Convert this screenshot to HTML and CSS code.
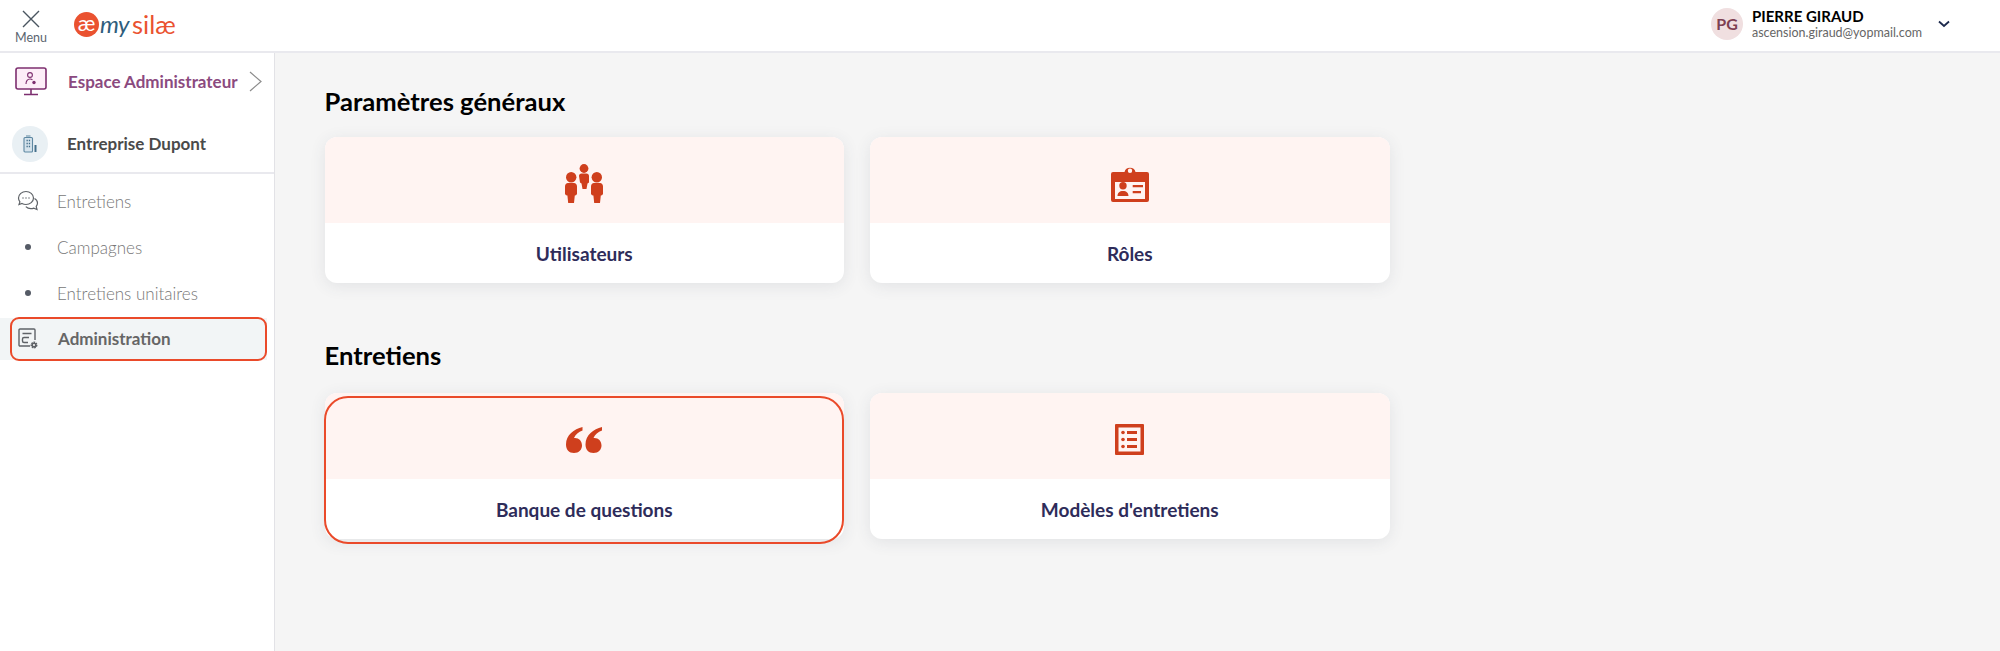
FILE: index.html
```html
<!DOCTYPE html>
<html lang="fr">
<head>
<meta charset="utf-8">
<title>mySilae</title>
<link rel="stylesheet" href="styles.css">
</head>
<body>
<header class="topbar">
  <div class="menu">
    <svg class="menu-x" viewBox="0 0 18 18" width="18" height="18"><path d="M1 1l16 16M17 1L1 17" fill="none" stroke="#4a5560" stroke-width="1.4"/></svg>
    <span class="menu-label">Menu</span>
  </div>
  <div class="logo">
    <span class="logo-badge">æ</span>
    <span class="logo-my">my</span>
    <span class="logo-silae">silæ</span>
  </div>
  <div class="user">
    <span class="avatar">PG</span>
    <div class="user-text">
      <span class="user-name">PIERRE GIRAUD</span>
      <span class="user-mail">ascension.giraud@yopmail.com</span>
    </div>
    <svg class="user-caret" viewBox="0 0 12 8" width="12" height="8"><path d="M1 1.500l5 4.500 5-4.500" fill="none" stroke="#1d2a4d" stroke-width="1.800"/></svg>
  </div>
</header>
<div class="shell">
  <aside class="sidebar">
    <div class="space">
      <svg class="space-icon" viewBox="0 0 32 29" width="32" height="29">
        <rect x="1" y="1" width="30" height="21" rx="2" fill="#fdeef8" stroke="#7d2f6f" stroke-width="1.600"/>
        <path d="M16 22v5M9 27.500h14" stroke="#7d2f6f" stroke-width="1.600" fill="none"/>
        <circle cx="15" cy="8" r="2.400" fill="none" stroke="#7d2f6f" stroke-width="1.100"/>
        <path d="M11 17c0-3 1.500-5 4-5 1 0 2 .4 2.500 1" fill="none" stroke="#7d2f6f" stroke-width="1.100"/>
        <circle cx="19" cy="15.500" r="1.700" fill="#7d2f6f"/>
      </svg>
      <span class="space-label">Espace Administrateur</span>
      <svg class="space-chev" viewBox="0 0 13 21" width="13" height="21"><path d="M1 1l11 9.500L1 20" fill="none" stroke="#8c8c8c" stroke-width="1.200"/></svg>
    </div>
    <div class="company">
      <span class="company-badge">
        <svg viewBox="0 0 14 18" width="14" height="18">
          <rect x="1" y="2.500" width="8.500" height="14.500" rx="1" fill="#d5e3ec" stroke="#5d87a1" stroke-width="1.100"/>
          <path d="M3 1h4.500" stroke="#5d87a1" stroke-width="1"/>
          <path d="M3.500 5.500h1.300M5.800 5.500h1.300M3.500 8.500h1.300M5.800 8.500h1.300M3.500 11.500h1.300M5.800 11.500h1.300" stroke="#44708c" stroke-width="1.300"/>
          <path d="M12.500 10v7" stroke="#44708c" stroke-width="2"/>
        </svg>
      </span>
      <span class="company-label">Entreprise Dupont</span>
    </div>
    <nav class="nav">
      <a class="nav-item">
        <span class="nav-ico">
          <svg viewBox="0 0 22 22" width="22" height="22" fill="none" stroke="#5f6368" stroke-width="1.200">
            <path d="M9 1.500c-4 0-7.500 2.800-7.500 6.500 0 1.500.5 2.800 1.400 3.900L2 14.500l3-1c1.200.7 2.500 1 4 1 4 0 7.500-2.800 7.500-6.500S13 1.500 9 1.500z"/>
            <path d="M17.500 8.500c1.800 1 3 2.700 3 4.600 0 1.300-.5 2.400-1.300 3.300l.8 3.100-3.200-1.400c-1 .4-2 .6-3 .6-2 0-3.800-.8-5-2"/>
            <path d="M5.500 8h1M8.500 8h1M11.500 8h1" stroke-width="1.500"/>
          </svg>
        </span>
        <span class="nav-label">Entretiens</span>
      </a>
      <a class="nav-item">
        <span class="nav-ico"><span class="dot"></span></span>
        <span class="nav-label">Campagnes</span>
      </a>
      <a class="nav-item">
        <span class="nav-ico"><span class="dot"></span></span>
        <span class="nav-label">Entretiens unitaires</span>
      </a>
      <a class="nav-item is-active">
        <span class="nav-ico">
          <svg viewBox="0 0 22 22" width="22" height="22" fill="none" stroke="#5f6368" stroke-width="1.400">
            <path d="M13 18H3a1 1 0 0 1-1-1V2a1 1 0 0 1 1-1h14a1 1 0 0 1 1 1v10"/>
            <path d="M5.500 5.500h9M12 9.500H7a1.500 1.500 0 0 0-1.500 1.500v2A1.500 1.500 0 0 0 7 14.500h4"/>
            <circle cx="17" cy="17" r="2.600" fill="#5f6368" stroke-width="1.800" stroke-dasharray="1.500 .8"/>
            <circle cx="17" cy="17" r="1" fill="#fff" stroke="none"/>
          </svg>
        </span>
        <span class="nav-label">Administration</span>
      </a>
    </nav>
  </aside>
  <main class="content">
    <h2 class="section-title">Paramètres généraux</h2>
    <div class="cards">
      <a class="card">
        <span class="card-top">
          <svg viewBox="0 0 38 39" width="38" height="39" fill="#cf3f1d">
            <circle cx="19" cy="4.500" r="4.400"/>
            <path d="M14 12c0-1.500 1-2.500 2.500-2.500h5c1.500 0 2.500 1 2.500 2.500v6.500l-1.500 1-1 5.500h-4l-1-5.500-1.500-1z"/>
            <circle cx="6.200" cy="13.200" r="5.200"/>
            <path d="M0 22.500c0-2 1.300-3.500 3-3.500h6c1.700 0 3 1.500 3 3.500V30l-1 1.200-1.200.3L9 39H3.200l-.8-7.500-1.400-.3-1-1.200z"/>
            <circle cx="31.800" cy="13.200" r="5.200"/>
            <path d="M26 22.500c0-2 1.300-3.500 3-3.500h6c1.700 0 3 1.500 3 3.500V30l-1 1.200-1.200.3-.8 7.500h-5.800l-.8-7.500-1.400-.3-1-1.200z"/>
          </svg>
        </span>
        <span class="card-label">Utilisateurs</span>
      </a>
      <a class="card">
        <span class="card-top">
          <svg viewBox="0 0 38 37" width="38" height="37" fill="#cf3f1d">
            <path fill-rule="evenodd" d="M2 7h11.500a5.700 5.700 0 0 1 11 0H36a2 2 0 0 1 2 2v26a2 2 0 0 1-2 2H2a2 2 0 0 1-2-2V9a2 2 0 0 1 2-2zM19 3.500a2.200 2.200 0 1 0 0 4.400 2.200 2.200 0 0 0 0-4.400zM4 17v17h30V17z"/>
            <circle cx="12" cy="20.700" r="3.700"/>
            <path d="M6.500 31c0-3 2-5 5.500-5s5.500 2 5.500 5zM21.700 20h10.300v2.300H21.700zM21.700 26h8.300v2.300h-8.300z"/>
          </svg>
        </span>
        <span class="card-label">Rôles</span>
      </a>
    </div>
    <h2 class="section-title section-second">Entretiens</h2>
    <div class="cards">
      <a class="card is-marked">
        <span class="card-top">
          <svg viewBox="0 0 36 27" width="36" height="27" fill="#cf3f1d">
            <path d="M16.500 1C8 3 0 9 0 18.500 0 23.500 3 27 8 27s8-3.500 8-7.500c0-4.500-3-7.500-7-7.500-.5 0-.8 0-1 .1C9.500 8.500 12.500 6 16.500 4.500z"/>
            <path d="M36 1c-8.500 2-16.500 8-16.500 17.500 0 5 3 8.500 8 8.500s8-3.500 8-7.500c0-4.500-3-7.500-7-7.500-.5 0-.8 0-1 .1C29 8.500 32 6 36 4.500z"/>
          </svg>
        </span>
        <span class="card-label">Banque de questions</span>
      </a>
      <a class="card">
        <span class="card-top">
          <svg viewBox="0 0 29 31" width="29" height="31" fill="#cf3f1d">
            <path fill-rule="evenodd" d="M1 0h27a1 1 0 0 1 1 1v29a1 1 0 0 1-1 1H1a1 1 0 0 1-1-1V1a1 1 0 0 1 1-1zM3.500 3.500v24h22v-24z"/>
            <circle cx="8" cy="8.500" r="1.800"/><circle cx="8" cy="15.500" r="1.800"/><circle cx="8" cy="22.500" r="1.800"/>
            <path d="M12 7h10v3H12zM12 14h10v3H12zM12 21h10v3H12z"/>
          </svg>
        </span>
        <span class="card-label">Modèles d'entretiens</span>
      </a>
    </div>
  </main>
</div>
</body>
</html>
```

FILE: styles.css
```css
* { box-sizing: border-box; }
html, body { margin: 0; height: 100%; }
body {
  font-family: Lato, "Liberation Sans", sans-serif;
  background: #f5f5f5;
  height: 651px;
  overflow: hidden;
  display: flex;
  flex-direction: column;
}

/* Top bar */
.topbar {
  flex: none;
  height: 53px;
  background: #fff;
  border-bottom: 2px solid #e9e9ee;
  display: flex;
  align-items: flex-start;
  padding-left: 15px;
}
.menu {
  width: 32px;
  display: flex;
  flex-direction: column;
  align-items: center;
  padding-top: 10px;
}
.menu-x { display: block; }
.menu-label {
  font-size: 12.500px;
  line-height: 14px;
  color: #5a6570;
  margin-top: 3px;
}
.logo {
  display: flex;
  align-items: center;
  margin-left: 27px;
  margin-top: 10px;
  height: 28px;
}
.logo-badge {
  width: 25px;
  height: 25px;
  border-radius: 50%;
  background: #ea5230;
  color: #fff;
  font-size: 22px;
  line-height: 22px;
  text-align: center;
}
.logo-my {
  font-style: italic;
  font-size: 24px;
  line-height: 28px;
  letter-spacing: -.5px;
  color: #2f5d7c;
  margin-left: 1px;
  width: 32px;
}
.logo-silae {
  font-size: 25.500px;
  line-height: 28px;
  font-weight: 400;
  color: #ea5230;
}
.user {
  margin-left: auto;
  margin-top: 8px;
  margin-right: 50px;
  display: flex;
  align-items: flex-start;
}
.avatar {
  width: 32px;
  height: 32px;
  border-radius: 50%;
  background: #f0dfe0;
  color: #7e3f52;
  font-size: 16px;
  font-weight: 700;
  line-height: 32px;
  text-align: center;
}
.user-text {
  display: flex;
  flex-direction: column;
  margin-left: 9px;
  width: 186px;
}
.user-name {
  font-size: 15px;
  line-height: 17px;
  font-weight: 700;
  color: #000;
}
.user-mail {
  font-size: 12.500px;
  line-height: 14px;
  margin-top: 1px;
  color: #666;
}
.user-caret { margin-top: 12px; }

/* Layout */
.shell {
  flex: 1;
  display: flex;
  min-height: 0;
}
.sidebar {
  flex: none;
  width: 275px;
  background: #fff;
  border-right: 1px solid #e2e2e6;
}
.space {
  display: flex;
  align-items: center;
  height: 57px;
  padding: 0 12px 0 15px;
}
.space-icon { flex: none; }
.space-label {
  margin-left: 21px;
  font-size: 17px;
  font-weight: 700;
  color: #8b4a7f;
  white-space: nowrap;
}
.space-chev { margin-left: auto; }
.company {
  display: flex;
  align-items: center;
  height: 64px;
  padding: 5px 0 0 12px;
  border-bottom: 2px solid #e9e9ee;
}
.company-badge {
  width: 36px;
  height: 36px;
  border-radius: 50%;
  background: #e9f0f4;
  display: flex;
  align-items: center;
  justify-content: center;
}
.company-label {
  margin-left: 19px;
  font-size: 17px;
  font-weight: 700;
  color: #4a4a4a;
}
.nav {
  padding-top: 6px;
  display: flex;
  flex-direction: column;
  gap: 4px;
}
.nav-item {
  position: relative;
  display: flex;
  align-items: center;
  height: 42px;
  margin-right: 7px;
  padding-left: 17px;
}
.nav-ico {
  width: 22px;
  height: 22px;
  display: flex;
  align-items: center;
  justify-content: center;
}
.nav-label {
  margin-left: 18px;
  font-size: 17px;
  font-weight: 300;
  color: #777;
}
.dot {
  width: 6px;
  height: 6px;
  border-radius: 50%;
  background: #555b66;
}
.is-active { background: #f2f5f6; }
.is-active .nav-label {
  margin-left: 19px;
  padding-bottom: 2px;
  font-weight: 700;
  color: #666;
}
.is-active::after {
  content: "";
  position: absolute;
  inset: -1px 0 -1px 10px;
  border: 2px solid #ea4a2a;
  border-radius: 9px;
}

/* Content */
.content {
  flex: 1;
  padding: 33px 0 0 49.500px;
}
.section-title {
  margin: 0 0 21px;
  font-size: 25.600px;
  line-height: 30px;
  font-weight: 700;
  color: #000;
}
.section-second { margin-top: 57px; margin-bottom: 23px; }
.cards {
  display: flex;
  gap: 26px;
}
.card {
  position: relative;
  width: 519.500px;
  height: 146px;
  background: #fff;
  border-radius: 12px;
  box-shadow: 0 3px 16px rgba(60, 70, 90, .1);
  display: flex;
  flex-direction: column;
}
.card-top {
  flex: none;
  height: 86px;
  padding-top: 6px;
  background: #fff4f2;
  border-radius: 12px 12px 0 0;
  display: flex;
  align-items: center;
  justify-content: center;
}
.card-label {
  flex: 1;
  display: flex;
  align-items: center;
  justify-content: center;
  font-size: 19px;
  font-weight: 700;
  color: #2e2c5a;
}
.is-marked::after {
  content: "";
  position: absolute;
  inset: 3px 0 -5px -1px;
  border: 2px solid #ea4a2a;
  border-radius: 24px;
}
```
